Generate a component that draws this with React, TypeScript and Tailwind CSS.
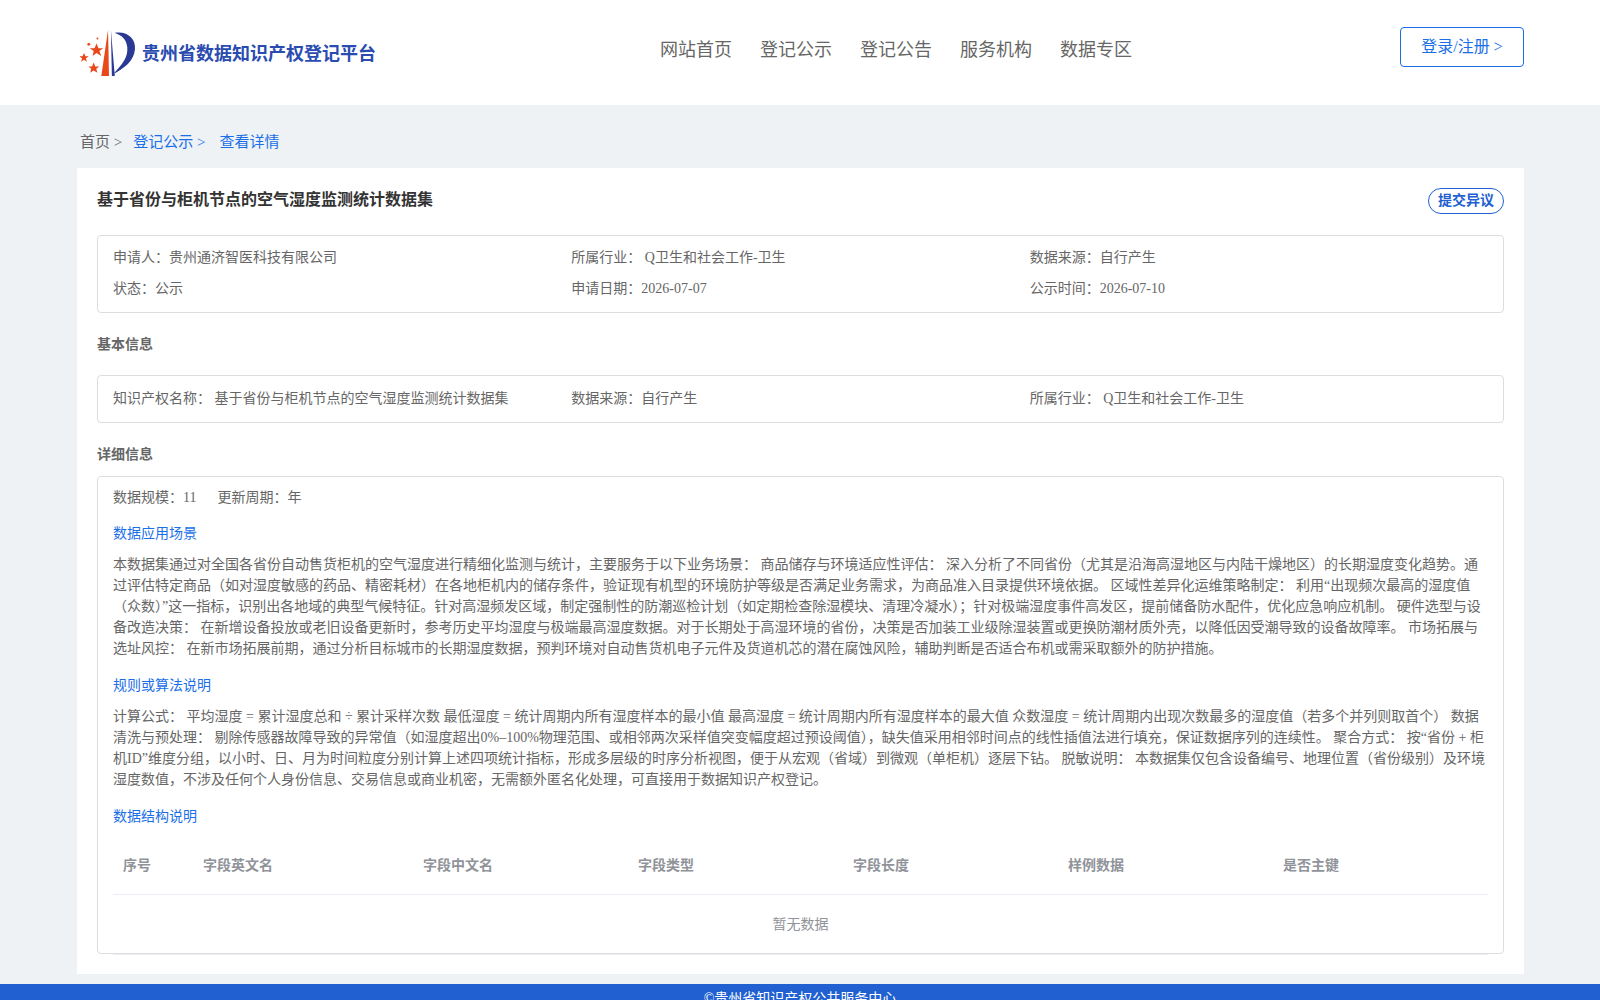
const FONT = 'font-["Liberation_Serif","Noto_Sans_CJK_SC",serif]';

const NAV = ['网站首页', '登记公示', '登记公告', '服务机构', '数据专区'];
const COLUMNS = ['序号', '字段英文名', '字段中文名', '字段类型', '字段长度', '样例数据', '是否主键'];

const SCENE =
  '本数据集通过对全国各省份自动售货柜机的空气湿度进行精细化监测与统计，主要服务于以下业务场景： 商品储存与环境适应性评估： 深入分析了不同省份（尤其是沿海高湿地区与内陆干燥地区）的长期湿度变化趋势。通过评估特定商品（如对湿度敏感的药品、精密耗材）在各地柜机内的储存条件，验证现有机型的环境防护等级是否满足业务需求，为商品准入目录提供环境依据。 区域性差异化运维策略制定： 利用“出现频次最高的湿度值（众数）”这一指标，识别出各地域的典型气候特征。针对高湿频发区域，制定强制性的防潮巡检计划（如定期检查除湿模块、清理冷凝水）；针对极端湿度事件高发区，提前储备防水配件，优化应急响应机制。 硬件选型与设备改造决策： 在新增设备投放或老旧设备更新时，参考历史平均湿度与极端最高湿度数据。对于长期处于高湿环境的省份，决策是否加装工业级除湿装置或更换防潮材质外壳，以降低因受潮导致的设备故障率。 市场拓展与选址风控： 在新市场拓展前期，通过分析目标城市的长期湿度数据，预判环境对自动售货机电子元件及货道机芯的潜在腐蚀风险，辅助判断是否适合布机或需采取额外的防护措施。';

const RULES =
  '计算公式： 平均湿度 = 累计湿度总和 ÷ 累计采样次数 最低湿度 = 统计周期内所有湿度样本的最小值 最高湿度 = 统计周期内所有湿度样本的最大值 众数湿度 = 统计周期内出现次数最多的湿度值（若多个并列则取首个） 数据清洗与预处理： 剔除传感器故障导致的异常值（如湿度超出0%–100%物理范围、或相邻两次采样值突变幅度超过预设阈值），缺失值采用相邻时间点的线性插值法进行填充，保证数据序列的连续性。 聚合方式： 按“省份 + 柜机ID”维度分组，以小时、日、月为时间粒度分别计算上述四项统计指标，形成多层级的时序分析视图，便于从宏观（省域）到微观（单柜机）逐层下钻。 脱敏说明： 本数据集仅包含设备编号、地理位置（省份级别）及环境湿度数值，不涉及任何个人身份信息、交易信息或商业机密，无需额外匿名化处理，可直接用于数据知识产权登记。';

function Logo() {
  return (
    <svg viewBox="0 0 60 52" className="w-[58px] h-[50px]">
      <path d="M22 50 L29 2 L30 50 Z" fill="#e8481a" />
      <path d="M32 2 L33 50 L36 50 Z" fill="#2a3a94" />
      <path d="M36 5 C50 3 58 12 57 22 C56 34 46 42 34 48 C44 38 50 30 49 20 C48 12 44 8 36 5 Z" fill="#2a3a94" />
      <path d="M17 16 l2 5 5 0 -4 3 2 5 -5 -3 -4 3 1 -5 -4 -3 5 0z" fill="#e8481a" />
      <path d="M4 26 l1.5 3.5 3.5 0 -3 2 1 3.5 -3 -2 -3 2 1 -3.500 -3 -2 3.500 0z" fill="#e8481a" />
      <path d="M14 36 l1.800 4 4 0 -3 2.500 1 4 -3.800 -2.300 -3.500 2.300 1 -4 -3 -2.500 4 0z" fill="#e8481a" />
      <circle cx="9" cy="17" r="1.500" fill="#e8481a" />
      <circle cx="18" cy="11" r="1" fill="#e8481a" />
    </svg>
  );
}

function Cell({ children }: { children: React.ReactNode }) {
  return <div className="h-[30px] leading-[30px]">{children}</div>;
}

export default function App() {
  return (
    <div className={`${FONT} bg-[#eef2f5] text-sm text-[#666]`}>
      {/* Header */}
      <header className="h-[105px] bg-white flex items-center justify-between pl-[80px] pr-[76px]">
        <div className="flex items-center gap-[4px] w-[320px]">
          <Logo />
          <span className="text-lg font-bold text-[#2a4bb0] mt-[2px]">贵州省数据知识产权登记平台</span>
        </div>
        <nav className="flex gap-[28px] text-lg text-[#666] ml-[-8px] mb-[6px]">
          {NAV.map(n => <a key={n}>{n}</a>)}
        </nav>
        <button className="w-[124px] h-[40px] mb-[12px] rounded border border-[#1a6fe8] text-base text-[#1a6fe8]">登录/注册 &gt;</button>
      </header>

      {/* Breadcrumb */}
      <div className="h-[63px] pl-[80px] pt-[26px] text-[15px] leading-[22px] flex">
        <span>首页 &gt;</span>
        <span className="ml-[11px] text-[#1a6fe8]">登记公示 &gt;</span>
        <span className="ml-[14px] text-[#1a6fe8]">查看详情</span>
      </div>

      {/* Detail card */}
      <main className="mx-[76px] ml-[77px] h-[806px] bg-white px-[20px]">
        <div className="flex items-start justify-between pt-[20px] h-[67px]">
          <h1 className="text-base font-bold text-[#333] leading-[24px]">基于省份与柜机节点的空气湿度监测统计数据集</h1>
          <button className="h-[26px] w-[76px] rounded-[13px] border border-[#2160d0] text-sm font-bold text-[#2160d0]">提交异议</button>
        </div>

        <div className="h-[78px] rounded border border-[#ddd] px-[15px] py-[7px] grid grid-cols-3">
          <Cell>申请人：贵州通济智医科技有限公司</Cell>
          <Cell>所属行业： Q卫生和社会工作-卫生</Cell>
          <Cell>数据来源：自行产生</Cell>
          <Cell>状态：公示</Cell>
          <Cell>申请日期：2026-07-07</Cell>
          <Cell>公示时间：2026-07-10</Cell>
        </div>

        <h2 className="h-[62px] pt-[21px] leading-[21px] font-bold">基本信息</h2>

        <div className="h-[48px] rounded border border-[#ddd] px-[15px] grid grid-cols-3 items-center">
          <div>知识产权名称： 基于省份与柜机节点的空气湿度监测统计数据集</div>
          <div>数据来源：自行产生</div>
          <div>所属行业： Q卫生和社会工作-卫生</div>
        </div>

        <h2 className="h-[53px] pt-[21px] leading-[21px] font-bold">详细信息</h2>

        <div className="h-[478px] rounded border border-[#ddd] px-[15px] pt-[10px]">
          <div className="leading-[21px]">
            数据规模：11<span className="ml-[21px]">更新周期：年</span>
          </div>
          <h3 className="mt-[15px] leading-[21px] text-[#1a6fe8]">数据应用场景</h3>
          <p className="mt-[10px] leading-[21px]">{SCENE}</p>
          <h3 className="mt-[16px] leading-[21px] text-[#1a6fe8]">规则或算法说明</h3>
          <p className="mt-[10px] leading-[21px]">{RULES}</p>
          <h3 className="mt-[16px] leading-[21px] text-[#1a6fe8]">数据结构说明</h3>

          <div className="mt-[10px]">
            <div className="grid grid-cols-[80px_220px_repeat(5,1fr)] h-[58px] items-center border-b border-[#ebeef5] font-bold text-[#909399]">
              {COLUMNS.map(c => <div key={c} className="px-[10px]">{c}</div>)}
            </div>
            <div className="h-[60px] flex items-center justify-center border-b border-[#ebeef5] text-[#909399]">暂无数据</div>
          </div>
        </div>
      </main>

      {/* Footer */}
      <div className="h-[10px]" />
      <footer className="h-[60px] bg-[#2160d0] text-center text-white leading-[30px]">©贵州省知识产权公共服务中心</footer>
    </div>
  );
}
